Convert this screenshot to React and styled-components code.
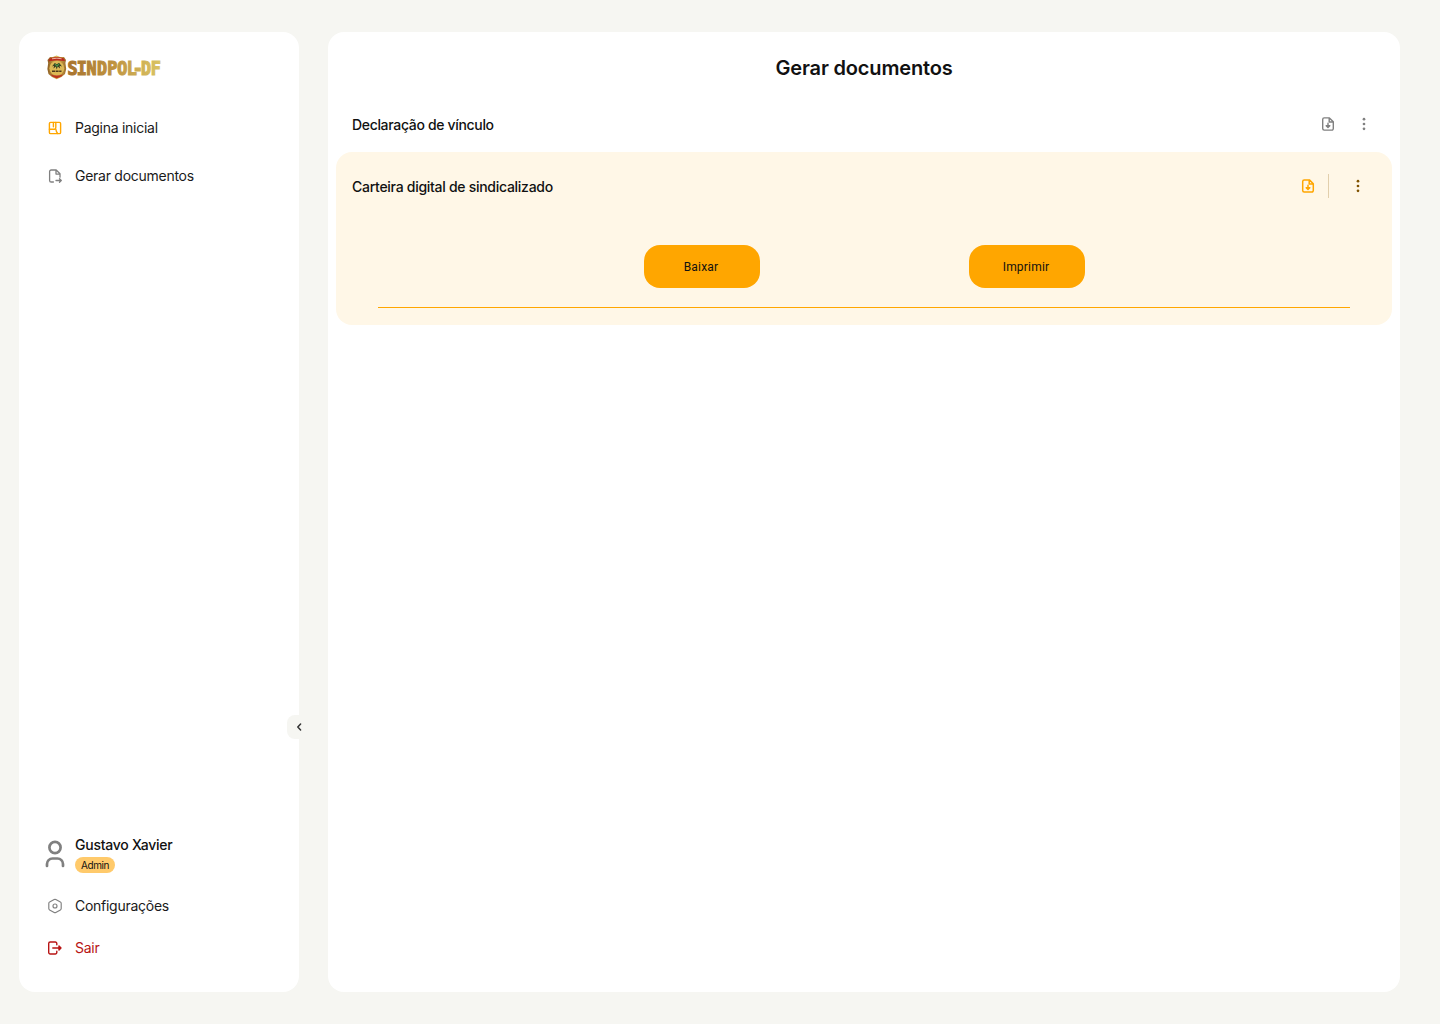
import React from "react";
import styled, { createGlobalStyle } from "styled-components";

const GlobalStyle = createGlobalStyle`
  * { box-sizing: border-box; }
  body {
    margin: 0;
    background: #f6f6f2;
    color: #111;
    font-family: Inter, "Liberation Sans", sans-serif;
  }
  button { font: inherit; color: inherit; border: 0; padding: 0; background: none; cursor: pointer; }
  svg { display: block; flex: none; }
`;

const Page = styled.div`
  display: flex;
  gap: 29px;
  height: 1024px;
  padding: 32px 40px 32px 19px;
`;

const Sidebar = styled.aside`
  position: relative;
  display: flex;
  flex-direction: column;
  width: 280px;
  padding: 23px 24px 32px;
  border-radius: 16px;
  background: #fff;
`;

const Logo = styled.div`
  display: flex;
  align-items: flex-start;
  height: 26px;
  padding-left: 4px;
`;

const Nav = styled.nav`
  display: flex;
  flex-direction: column;
  gap: 24px;
  margin-top: 35px;
`;

const NavItem = styled.a`
  display: flex;
  align-items: center;
  gap: 12px;
  height: 24px;
  padding-left: 4px;
  font-size: 14px;
  letter-spacing: -0.27px;
  color: ${(p) => p.$color || "#1a1a1a"};
`;

const Label = styled.span`
  line-height: 24px;
`;

const Footer = styled.div`
  display: flex;
  flex-direction: column;
  margin-top: auto;
`;

const Profile = styled.div`
  display: flex;
  align-items: center;
  gap: 8px;
  height: 40px;
  margin-bottom: 20px;
`;

const ProfileText = styled.div`
  display: flex;
  flex-direction: column;
  align-items: flex-start;
  gap: 2px;
`;

const Name = styled.span`
  font-size: 14px;
  font-weight: 500;
  letter-spacing: -0.25px;
  line-height: 20px;
`;

const Badge = styled.span`
  width: 40px;
  height: 16px;
  border-radius: 8px;
  background: #ffca6b;
  font-size: 10px;
  letter-spacing: -0.42px;
  line-height: 17px;
  text-align: center;
`;

const FooterLinks = styled.div`
  display: flex;
  flex-direction: column;
  gap: 18px;
`;

const Collapse = styled.button`
  position: absolute;
  top: 683px;
  right: -12px;
  display: flex;
  align-items: center;
  justify-content: center;
  width: 24px;
  height: 24px;
  border-radius: 8px;
  background: #f6f6f2;
`;

const Main = styled.main`
  flex: 1;
  padding: 20px 8px;
  border-radius: 16px;
  background: #fff;
`;

const Title = styled.h1`
  margin: 0;
  font-size: 20px;
  font-weight: 600;
  letter-spacing: -0.17px;
  line-height: 32px;
  text-align: center;
`;

const Row = styled.div`
  display: flex;
  align-items: center;
  justify-content: space-between;
  height: ${(p) => p.$height};
  padding: 0 ${(p) => p.$right} 0 16px;
  font-size: 14px;
  font-weight: 500;
  letter-spacing: ${(p) => p.$spacing};
`;

const Actions = styled.div`
  display: flex;
  align-items: center;
  gap: ${(p) => p.$gap};
`;

const Separator = styled.span`
  width: 1px;
  height: 24px;
  margin: 0 13px 0 4px;
  background: #e2cfac;
`;

const List = styled.section`
  padding-top: 20px;
`;

const OpenCard = styled.article`
  height: 173px;
  margin-top: 8px;
  border-radius: 16px;
  background: #fff7e7;
`;

const ButtonBar = styled.div`
  display: flex;
  justify-content: center;
  gap: 209px;
  height: 63px;
  margin: 25px 42px 0;
  border-bottom: 1px solid #ffa600;
`;

const Button = styled.button`
  width: 116px;
  height: 43px;
  padding-right: 1px;
  border-radius: 16px;
  background: #ffa600;
  color: #111;
  font-family: Roboto, sans-serif;
  font-size: 12px;
  letter-spacing: 0.2px;
`;

function Icon({ size = 16, color = "#808080", width = 1.3, children }) {
  return (
    <svg width={size} height={size} viewBox="0 0 16 16" fill="none" stroke={color}
      strokeWidth={width} strokeLinecap="round" strokeLinejoin="round">
      {children}
    </svg>
  );
}

function Crest() {
  return (
    <svg width="20" height="25" viewBox="0 0 20 25">
      <defs>
        <linearGradient id="shield" x2="1">
          <stop stopColor="#8a5a20" />
          <stop offset=".5" stopColor="#e0bd55" />
          <stop offset="1" stopColor="#9c6b28" />
        </linearGradient>
      </defs>
      <path d="M3 2 6 2 9.6.5 13 2l4 0 2 3-.6 3 .8 6-1.2 5-3.5 3-4.9 2.2L5 22l-3.5-3L.4 14l.8-6L.5 5Z" fill="url(#shield)" />
      <path d="M2.5 3.5Q10 .3 17 3.5l1 2.6Q10 4.6 1.6 6.3Z" fill="#b9291d" />
      <path d="M5 3.8Q10 2.6 14.6 3.8" fill="none" stroke="#eab5a0" strokeWidth="1" />
      <ellipse cx="9.8" cy="13.2" rx="7.4" ry="7.2" fill="#dcb955" />
      <path d="M5 11.6 7.8 8l2 1.3L12 7.8l3 3.8-2.5-.8.6 2.6-2.4-2-.9 3.2-1-3.2-2.3 2 .6-2.6Z" fill="#343c20" />
      <path d="m8 9 2 2.2 2-2.4" fill="none" stroke="#4e9a4b" strokeWidth="1.1" />
      <path d="M5 16.2h9.5" stroke="#4c391a" strokeWidth="1.5" strokeDasharray="3 .6" />
      <path d="M3.3 19.2Q10 22 16.2 19.2l-2 2.2-4.5 2-4.3-2Z" fill="#bb3420" />
    </svg>
  );
}

const Wordmark = styled.svg`
  overflow: visible;
`;

function Brand() {
  return (
    <>
      <Crest />
      <Wordmark width="96" height="26" viewBox="0 0 96 26">
        <defs>
          <linearGradient id="gold" gradientUnits="userSpaceOnUse" x1="0" x2="104" y1="0" y2="0">
            <stop stopColor="#a8732e" />
            <stop offset=".5" stopColor="#bf9340" />
            <stop offset="1" stopColor="#dac465" />
          </linearGradient>
        </defs>
        <text transform="scale(.9 1)" y="20" textAnchor="middle"
          x="6.3 16.5 27.2 38.9 50.3 61.3 71.9 78.7 87.8 98.6" fill="url(#gold)" stroke="url(#gold)"
          strokeWidth="1.2" fontFamily="DejaVu Sans Mono, monospace" fontWeight="700" fontSize="18.6">
          SINDPOL-DF
        </text>
      </Wordmark>
    </>
  );
}

const HomeIcon = () => (
  <Icon color="#ffa600" width={1.4}>
    <rect x="2.4" y="2.4" width="11.2" height="11.2" rx="1.2" />
    <path d="M6.4 2.4v4.4M2.4 9.2h5.2M8.8 2.4v5.2q0 1.6-1.4 1.6M8.8 9q.3 2.6 1.8 4.4" />
  </Icon>
);

const ExportIcon = () => (
  <Icon>
    <path d="M6.4 14H4.2A1.6 1.6 0 0 1 2.6 12.4V3.6A1.6 1.6 0 0 1 4.2 2h5l3.8 3.8v3.4M9 2.2v3.9h3.8M9 12.5h5.3M12.5 10.7l1.8 1.8-1.8 1.8" />
  </Icon>
);

const DownloadIcon = ({ color, width = 1.4 }) => (
  <Icon color={color} width={width}>
    <path d="M4.2 1.9h5.2l3.9 3.9v6.8a1.5 1.5 0 0 1-1.5 1.5H4.2a1.5 1.5 0 0 1-1.5-1.5V3.4a1.5 1.5 0 0 1 1.5-1.5ZM9.2 2.1V6h3.9M8 7.3v4M6.2 9.7 8 11.5l1.8-1.8Z" />
  </Icon>
);

const DotsIcon = ({ color }) => (
  <svg width="16" height="16" viewBox="0 0 16 16" fill={color}>
    <circle cx="8" cy="3.2" r="1.35" />
    <circle cx="8" cy="8" r="1.35" />
    <circle cx="8" cy="12.8" r="1.35" />
  </svg>
);

const UserIcon = () => (
  <svg width="24" height="30" viewBox="0 0 24 30" fill="none" stroke="#808080" strokeWidth="2.7" strokeLinecap="round">
    <circle cx="12" cy="8.5" r="5.6" />
    <path d="M4 27v-2a5.5 5.5 0 0 1 5.5-5.5h5A5.5 5.5 0 0 1 20 25v2" />
  </svg>
);

const SettingsIcon = () => (
  <Icon width={1.15}>
    <path d="M7.2 1.5q.8-.4 1.6 0l4.6 2.6q.8.4.8 1.3v5.2q0 .9-.8 1.3l-4.6 2.6q-.8.4-1.6 0l-4.6-2.6q-.8-.4-.8-1.3V5.4q0-.9.8-1.3Z" />
    <circle cx="8" cy="8" r="2" />
  </Icon>
);

const LogoutIcon = () => (
  <Icon color="#b81414" width={1.4}>
    <path d="M9.8 4.8V3.5A1.5 1.5 0 0 0 8.3 2H3.2a1.5 1.5 0 0 0-1.5 1.5v9A1.5 1.5 0 0 0 3.2 14h5.1a1.5 1.5 0 0 0 1.5-1.5v-1.3M5.8 8H14M12 6l2 2-2 2Z" />
  </Icon>
);

export default function App() {
  return (
    <>
      <GlobalStyle />
      <Page>
        <Sidebar>
          <Logo><Brand /></Logo>
          <Nav>
            <NavItem><HomeIcon /><Label>Pagina inicial</Label></NavItem>
            <NavItem><ExportIcon /><Label>Gerar documentos</Label></NavItem>
          </Nav>
          <Footer>
            <Profile>
              <UserIcon />
              <ProfileText>
                <Name>Gustavo Xavier</Name>
                <Badge>Admin</Badge>
              </ProfileText>
            </Profile>
            <FooterLinks>
              <NavItem><SettingsIcon /><Label>Configurações</Label></NavItem>
              <NavItem $color="#b81414"><LogoutIcon /><Label>Sair</Label></NavItem>
            </FooterLinks>
          </Footer>
          <Collapse aria-label="Recolher menu">
            <Icon color="#333" width={1.5}><path d="M9.6 5 6.8 8l2.8 3" /></Icon>
          </Collapse>
        </Sidebar>
        <Main>
          <Title>Gerar documentos</Title>
          <List>
            <Row $height="40px" $right="20px" $spacing="-0.33px">
              Declaração de vínculo
              <Actions $gap="20px">
                <DownloadIcon />
                <DotsIcon color="#808080" />
              </Actions>
            </Row>
            <OpenCard>
              <Row $height="68px" $right="26px" $spacing="-0.28px">
                Carteira digital de sindicalizado
                <Actions $gap="8px">
                  <DownloadIcon color="#ffa600" width={1.5} />
                  <Separator />
                  <DotsIcon color="#805300" />
                </Actions>
              </Row>
              <ButtonBar>
                <Button>Baixar</Button>
                <Button>Imprimir</Button>
              </ButtonBar>
            </OpenCard>
          </List>
        </Main>
      </Page>
    </>
  );
}
